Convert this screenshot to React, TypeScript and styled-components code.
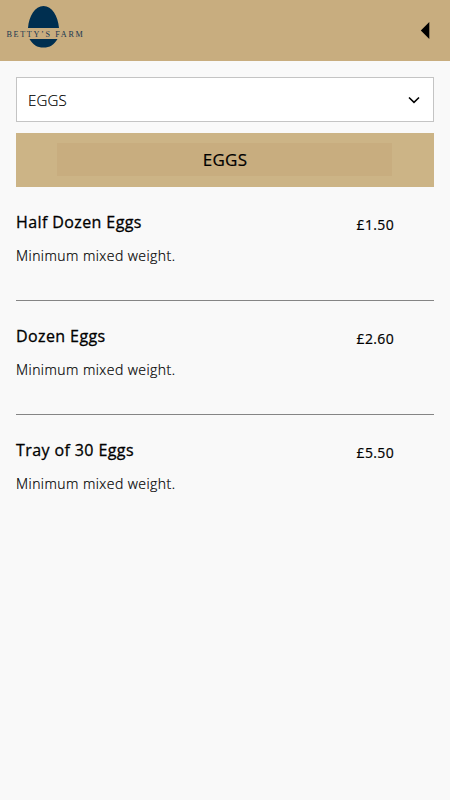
import React from 'react';
import styled, { createGlobalStyle } from 'styled-components';

const GlobalStyle = createGlobalStyle`
  * { box-sizing: border-box; }
  body { margin: 0; background: #f9f9f9; color: #000; font-family: "Open Sans", sans-serif; }
  h1, h2, p { margin: 0; }
`;

const Page = styled.div`
  min-height: 800px;
`;

const Header = styled.header`
  display: flex;
  justify-content: space-between;
  align-items: center;
  height: 61px;
  padding: 0 20px 0 6px;
  background: #c8ad7f;
`;

const Logo = styled.svg`
  display: block;
  width: 80px;
  height: 61px;
`;

const BackButton = styled.button`
  display: flex;
  padding: 0;
  border: 0;
  background: none;
`;

const Content = styled.main`
  padding: 16px 16px 0;
`;

const CategorySelect = styled.button`
  display: flex;
  align-items: center;
  justify-content: space-between;
  width: 100%;
  height: 45px;
  padding: 0 13px 0 11px;
  border: 1px solid #c4c4c4;
  background: #fff;
  color: #000;
  font: 300 15px "Open Sans", sans-serif;
  letter-spacing: 0.15px;
  -webkit-text-stroke: 0.2px #000;
`;

const Banner = styled.div`
  display: flex;
  height: 54px;
  padding: 10px 0 0 41px;
  margin-top: 11px;
  background: #ccb486;
`;

const BannerTitle = styled.h1`
  width: 335px;
  height: 33px;
  padding-left: 1px;
  background: #c8ad7f;
  font-size: 17px;
  font-weight: 500;
  letter-spacing: 0.3px;
  line-height: 33px;
  text-align: center;
  -webkit-text-stroke: 0.2px #000;
`;

const Item = styled.article`
  display: flex;
  justify-content: space-between;
  height: 114px;
  padding: 23px 40px 0 0;
  border-bottom: 1px solid #858585;
  &:last-child { border-bottom: 0; }
`;

const ItemName = styled.h2`
  font-size: 16px;
  font-weight: 500;
  letter-spacing: 0.4px;
  line-height: 24px;
  -webkit-text-stroke: 0.3px #000;
`;

const Description = styled.p`
  margin-top: 11px;
  font-size: 14px;
  font-weight: 300;
  letter-spacing: 0.45px;
  line-height: 22px;
  -webkit-text-stroke: 0.2px #000;
`;

const Price = styled.p`
  padding-top: 4px;
  font-size: 14px;
  font-weight: 500;
  letter-spacing: 0.35px;
  line-height: 22px;
  -webkit-text-stroke: 0.2px #000;
`;

const items = [
  { name: 'Half Dozen Eggs', price: '£1.50' },
  { name: 'Dozen Eggs', price: '£2.60' },
  { name: 'Tray of 30 Eggs', price: '£5.50' },
];

export default function App() {
  return (
    <Page>
      <GlobalStyle />
      <Header>
        <Logo viewBox="6 0 80 61" role="img" aria-label="Betty's Farm">
          <path d="M28 28C29 16 35 6 43.500 6S58 16 59 28ZM29.500 39H57.500C54 45 50 47.500 43.500 47.500S33 45 29.500 39Z" fill="#002f50" />
          <text x="6.500" y="36.800" textLength="78" fontFamily="Liberation Serif" fontSize="8.200" letterSpacing="1.700" fill="#173650">BETTY’S FARM</text>
        </Logo>
        <BackButton aria-label="Back">
          <svg width="10" height="17" viewBox="0 0 10 17"><path d="M9.300 0V17L0.800 8.500Z" /></svg>
        </BackButton>
      </Header>
      <Content>
        <CategorySelect>
          EGGS
          <svg width="12" height="8" viewBox="0 0 12 8" fill="none" stroke="#000" strokeWidth="1.600"><path d="M1 1.500L6 6.300L11 1.500" /></svg>
        </CategorySelect>
        <Banner><BannerTitle>EGGS</BannerTitle></Banner>
        {items.map((item) => (
          <Item key={item.name}>
            <div>
              <ItemName>{item.name}</ItemName>
              <Description>Minimum mixed weight.</Description>
            </div>
            <Price>{item.price}</Price>
          </Item>
        ))}
      </Content>
    </Page>
  );
}
